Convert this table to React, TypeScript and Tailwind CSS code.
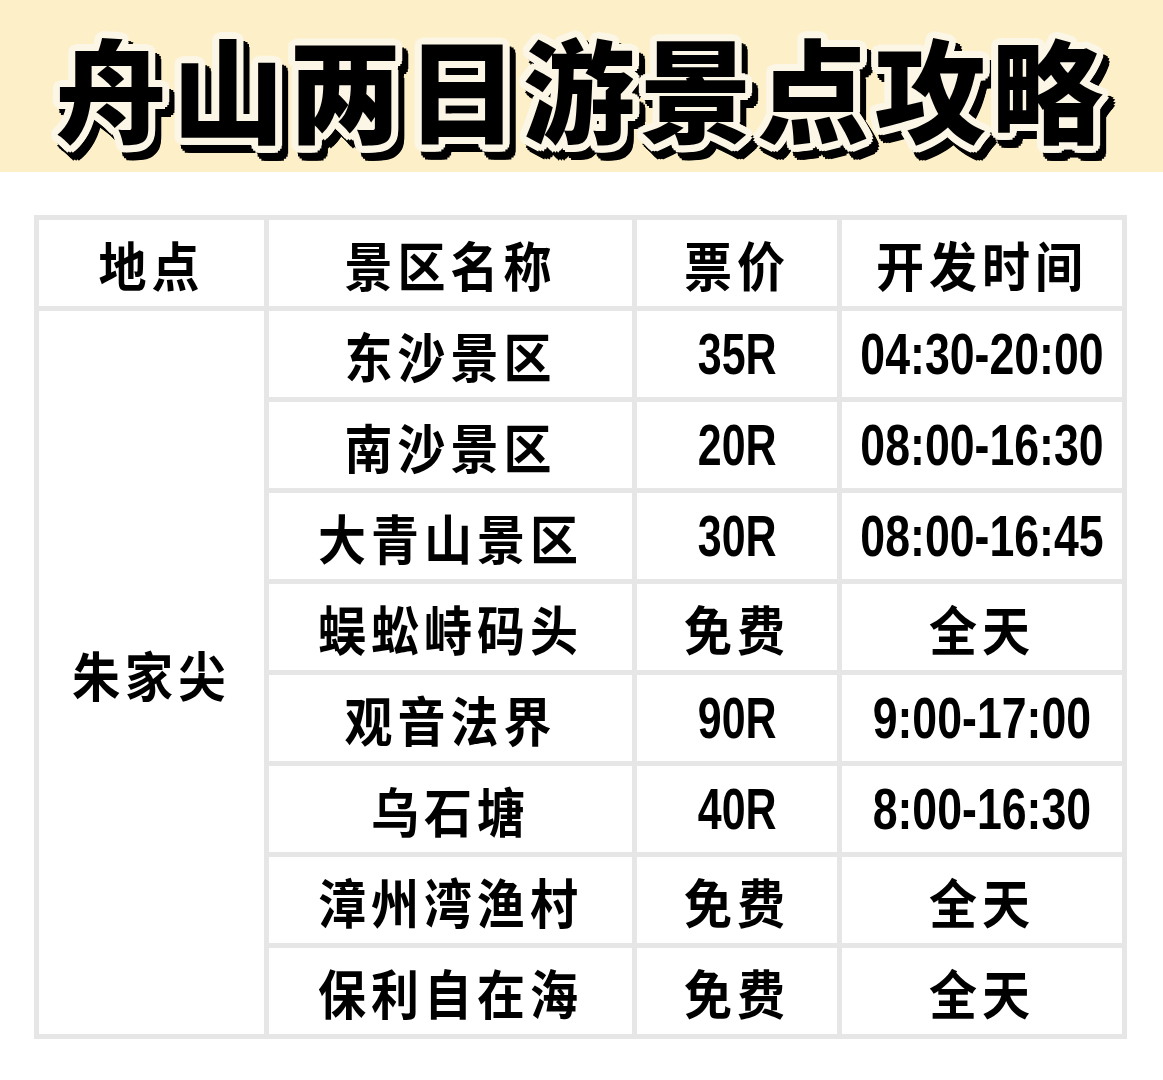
import React from 'react'

// ─── Data ────────────────────────────────────────────────────────────────────

interface Spot {
  name: string
  price: string
  hours: string
}

const SPOTS: Spot[] = [
  { name: '东沙景区', price: '35R', hours: '04:30-20:00' },
  { name: '南沙景区', price: '20R', hours: '08:00-16:30' },
  { name: '大青山景区', price: '30R', hours: '08:00-16:45' },
  { name: '蜈蚣峙码头', price: '免费', hours: '全天' },
  { name: '观音法界', price: '90R', hours: '9:00-17:00' },
  { name: '乌石塘', price: '40R', hours: '8:00-16:30' },
  { name: '漳州湾渔村', price: '免费', hours: '全天' },
  { name: '保利自在海', price: '免费', hours: '全天' },
]

const TITLE = '舟山两日游景点攻略'

// ─── Sub-components ──────────────────────────────────────────────────────────

function Cjk({ children }: { children: React.ReactNode }) {
  return (
    <span className="font-['Noto_Sans_CJK_SC',sans-serif] font-bold text-[48px] leading-none tracking-[5px] text-black scale-y-[1.12] inline-block">
      {children}
    </span>
  )
}

function Num({ children, wide = false }: { children: React.ReactNode; wide?: boolean }) {
  return (
    <span
      className={`font-['Liberation_Sans',Arial,sans-serif] font-bold text-[58px] leading-none text-black inline-block whitespace-nowrap ${
        wide ? 'scale-x-[0.77]' : 'scale-x-[0.74]'
      }`}
    >
      {children}
    </span>
  )
}

function isAscii(s: string) {
  return /^[\x00-\x7F]+$/.test(s)
}

function Value({ text, wide = false }: { text: string; wide?: boolean }) {
  return isAscii(text) ? <Num wide={wide}>{text}</Num> : <Cjk>{text}</Cjk>
}

function Cell({ children, className = '' }: { children: React.ReactNode; className?: string }) {
  return <div className={`bg-white flex items-center justify-center ${className}`}>{children}</div>
}

// cream outline (r=7) then black drop shadow offset (6,8)
function Title() {
  return (
    <h1 className="font-['Noto_Sans_CJK_SC',sans-serif] font-black text-[112px] leading-none tracking-[5px] whitespace-nowrap text-black [text-shadow:7px_0_0.5px_#fbf6e6,6.5px_2.7px_0.5px_#fbf6e6,5px_5px_0.5px_#fbf6e6,2.7px_6.5px_0.5px_#fbf6e6,0_7px_0.5px_#fbf6e6,-2.7px_6.5px_0.5px_#fbf6e6,-5px_5px_0.5px_#fbf6e6,-6.5px_2.7px_0.5px_#fbf6e6,-7px_0_0.5px_#fbf6e6,-6.5px_-2.7px_0.5px_#fbf6e6,-5px_-5px_0.5px_#fbf6e6,-2.7px_-6.5px_0.5px_#fbf6e6,0_-7px_0.5px_#fbf6e6,2.7px_-6.5px_0.5px_#fbf6e6,5px_-5px_0.5px_#fbf6e6,6.5px_-2.7px_0.5px_#fbf6e6,4px_0_0_#fbf6e6,0_4px_0_#fbf6e6,-4px_0_0_#fbf6e6,0_-4px_0_#fbf6e6,13px_8px_0.5px_#000,12.5px_10.7px_0.5px_#000,11px_13px_0.5px_#000,8.7px_14.5px_0.5px_#000,6px_15px_0.5px_#000,3.3px_14.5px_0.5px_#000,1px_13px_0.5px_#000,-0.5px_10.7px_0.5px_#000,-1px_8px_0.5px_#000,-0.5px_5.3px_0.5px_#000,1px_3px_0.5px_#000,3.3px_1.5px_0.5px_#000,6px_1px_0.5px_#000,8.7px_1.5px_0.5px_#000,11px_3px_0.5px_#000,12.5px_5.3px_0.5px_#000,6px_8px_0_#000]">
      {TITLE}
    </h1>
  )
}

// ─── Main ────────────────────────────────────────────────────────────────────

export default function App() {
  return (
    <div className="w-[1163px] min-h-[1080px] bg-white">
      <header className="h-[172px] bg-[#fdf0c9] flex items-center justify-center">
        <Title />
      </header>

      <div className="mt-[43px] ml-[34px] w-[1093px] grid grid-cols-[225px_363px_200px_280px] auto-rows-[86px] gap-[5px] p-[5px] bg-[#e6e6e6]">
        <Cell><Cjk>地点</Cjk></Cell>
        <Cell><Cjk>景区名称</Cjk></Cell>
        <Cell><Cjk>票价</Cjk></Cell>
        <Cell><Cjk>开发时间</Cjk></Cell>

        <Cell className="row-span-8"><Cjk>朱家尖</Cjk></Cell>
        {SPOTS.map(s => (
          <React.Fragment key={s.name}>
            <Cell><Cjk>{s.name}</Cjk></Cell>
            <Cell><Value text={s.price} /></Cell>
            <Cell><Value text={s.hours} wide /></Cell>
          </React.Fragment>
        ))}
      </div>
    </div>
  )
}
